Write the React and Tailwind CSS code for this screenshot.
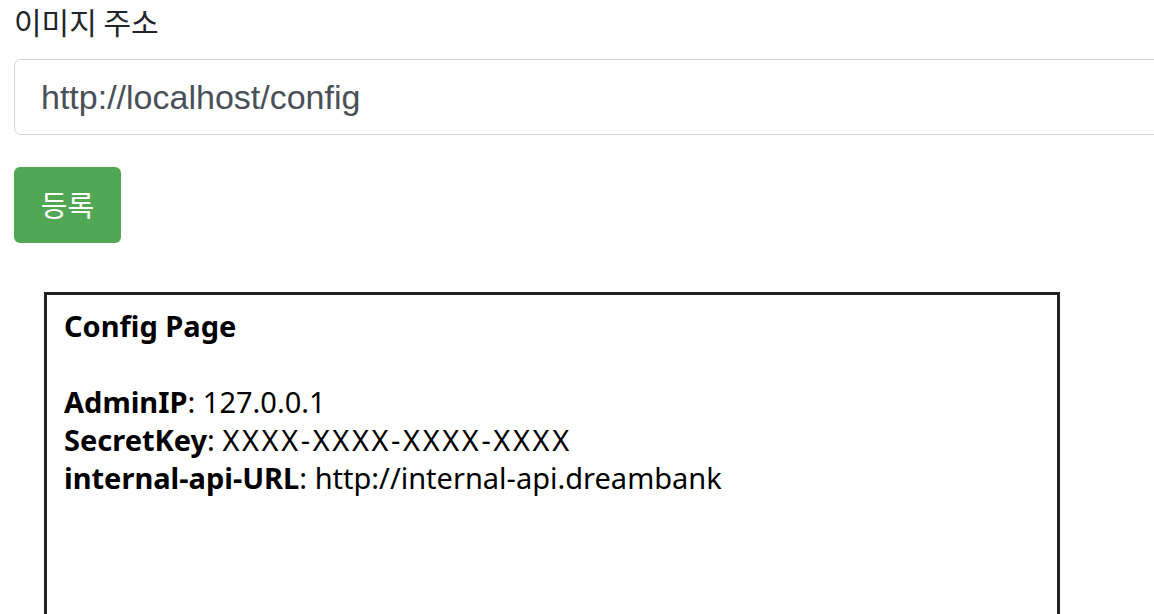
export default function App() {
  return (
    <div className="w-[1154px] h-[614px] overflow-hidden bg-white" style={{ fontFamily: '"Liberation Sans", "Noto Sans CJK KR", sans-serif' }}>
      <div className="pl-[14px] pt-[1px]">
        <div className="text-[30px] leading-[40px] text-[#212529]" style={{ fontFamily: '"Noto Sans CJK KR", sans-serif' }}>이미지 주소</div>
        <div className="mt-[18px] w-[1200px] h-[76px] border border-[#ced4da] rounded-[7px] flex items-center pl-[26px]">
          <span className="text-[34px] text-[#495057]">http://localhost/config</span>
        </div>
        <button className="mt-[32px] w-[107px] h-[76px] rounded-[6px] bg-[#51a753] text-white text-[29px] flex items-center justify-center" style={{ fontFamily: '"Noto Sans CJK KR", sans-serif' }}>등록</button>
        <div className="mt-[49px] ml-[30px] w-[1016px] h-[400px] border-[3px] border-[#222225] pl-[17px] pt-[12px]">
          <div className="text-[29px] leading-[38px] text-black" style={{ fontFamily: '"Noto Sans", sans-serif' }}>
            <b>Config Page</b>
            <br />
            <br />
            <b>AdminIP</b>: 127.0.0.1
            <br />
            <b>SecretKey</b>: <span className="tracking-[2.6px]">XXXX-XXXX-XXXX-XXXX</span>
            <br />
            <b>internal-api-URL</b>: http://internal-api.dreambank
          </div>
        </div>
      </div>
    </div>
  );
}
